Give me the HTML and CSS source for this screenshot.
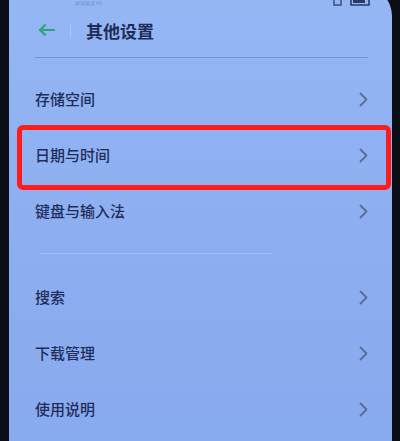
FILE: index.html
```html
<!DOCTYPE html>
<html lang="zh-CN">
<head>
<meta charset="utf-8">
<link rel="stylesheet" href="styles.css">
</head>
<body>
<div class="screen">
  <div class="status">
    <span class="carrier">中国移动 4G</span>
    <span class="sicons">
      <svg width="10" height="6" viewBox="0 0 10 6"><path d="M1 0 V5 H8 V0" fill="none" stroke="#3b4c7a" stroke-width="1.4"/></svg>
      <svg width="22" height="6" viewBox="0 0 22 6"><path d="M1 0 V5 H19 V0" fill="none" stroke="#2c3a66" stroke-width="1.6"/><rect x="3" y="0" width="12" height="3" fill="#2c3a66"/></svg>
    </span>
  </div>
  <div class="header">
    <svg class="back" width="17" height="12" viewBox="0 0 17 12"><path d="M16 6 H2.5 M7 1.2 L2 6 L7 10.8" fill="none" stroke="#2aa57c" stroke-width="2.2" stroke-linecap="round" stroke-linejoin="round"/></svg>
    <span class="vsep"></span>
    <span class="title">其他设置</span>
  </div>
  <div class="divider"></div>
  <div class="list first">
    <div class="row"><span>存储空间</span><svg class="chev" width="9" height="15" viewBox="0 0 9 15"><path d="M1.5 1.5 L7.5 7.5 L1.5 13.5" fill="none" stroke="#5a6c98" stroke-width="1.8" stroke-linecap="round" stroke-linejoin="round"/></svg></div>
    <div class="row marked"><span>日期与时间</span><svg class="chev" width="9" height="15" viewBox="0 0 9 15"><path d="M1.5 1.5 L7.5 7.5 L1.5 13.5" fill="none" stroke="#5a6c98" stroke-width="1.8" stroke-linecap="round" stroke-linejoin="round"/></svg></div>
    <div class="row"><span>键盘与输入法</span><svg class="chev" width="9" height="15" viewBox="0 0 9 15"><path d="M1.5 1.5 L7.5 7.5 L1.5 13.5" fill="none" stroke="#5a6c98" stroke-width="1.8" stroke-linecap="round" stroke-linejoin="round"/></svg></div>
  </div>
  <div class="section-gap"><div class="faint"></div></div>
  <div class="list">
    <div class="row"><span>搜索</span><svg class="chev" width="9" height="15" viewBox="0 0 9 15"><path d="M1.5 1.5 L7.5 7.5 L1.5 13.5" fill="none" stroke="#5a6c98" stroke-width="1.8" stroke-linecap="round" stroke-linejoin="round"/></svg></div>
    <div class="row"><span>下载管理</span><svg class="chev" width="9" height="15" viewBox="0 0 9 15"><path d="M1.5 1.5 L7.5 7.5 L1.5 13.5" fill="none" stroke="#5a6c98" stroke-width="1.8" stroke-linecap="round" stroke-linejoin="round"/></svg></div>
    <div class="row"><span>使用说明</span><svg class="chev" width="9" height="15" viewBox="0 0 9 15"><path d="M1.5 1.5 L7.5 7.5 L1.5 13.5" fill="none" stroke="#5a6c98" stroke-width="1.8" stroke-linecap="round" stroke-linejoin="round"/></svg></div>
  </div>
</div>
</body>
</html>
```
FILE: styles.css
```css
html, body {
  margin: 0;
  padding: 0;
  height: 441px;
  overflow: hidden;
  background: #0c0e17;
}
body {
  font-family: "Noto Sans CJK SC", "Noto Sans", sans-serif;
}
.screen {
  margin: -14px 8px 0 9px;
  padding-top: 14px;
  height: 460px;
  background: linear-gradient(180deg, #95b7f4 0%, #8eb0f1 45%, #88aaee 100%);
  border-top-right-radius: 30px;
  border-top-left-radius: 4px;
  box-sizing: border-box;
}
.status {
  height: 6px;
  display: flex;
  align-items: flex-start;
  justify-content: space-between;
  padding: 0 20px 0 66px;
  overflow: hidden;
}
.carrier {
  font-size: 5px;
  line-height: 6px;
  color: rgba(40, 55, 100, 0.35);
}
.sicons {
  display: flex;
  gap: 7px;
  align-items: flex-start;
}
.sicons svg { display: block; }
.header {
  height: 51px;
  display: flex;
  align-items: center;
  padding-left: 29px;
  box-sizing: border-box;
  padding-bottom: 4px;
}
.back { display: block; }
.vsep {
  width: 1px;
  height: 14px;
  background: rgba(255, 255, 255, 0.25);
  margin: 0 15px 0 15px;
}
.title {
  font-size: 17px;
  font-weight: 700;
  color: #1f2c5a;
  margin-top: 2px;
}
.divider {
  height: 1px;
  margin: 0 24px 0 26px;
  background: rgba(70, 90, 145, 0.35);
}
.list.first { padding-top: 12px; }
.row {
  height: 56px;
  display: flex;
  align-items: center;
  justify-content: space-between;
  padding: 0 24px 0 26px;
  position: relative;
}
.row span {
  font-size: 15px;
  font-weight: 500;
  color: #1f2d5c;
}
.chev { display: block; margin-top: 3px; }
.marked::after {
  content: "";
  position: absolute;
  top: -1px;
  bottom: -8px;
  left: 8px;
  right: 1px;
  border: 5px solid #ff1c1c;
  border-radius: 6px;
}
.section-gap {
  height: 30px;
  display: flex;
  align-items: center;
  padding: 0 120px 0 31px;
}
.faint {
  flex: 1;
  height: 1px;
  background: rgba(255, 255, 255, 0.22);
}
```
